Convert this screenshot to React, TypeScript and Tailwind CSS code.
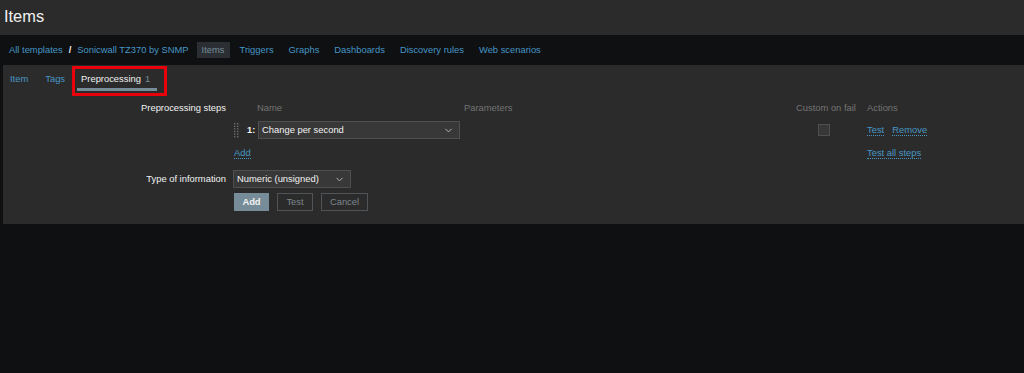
import { ChevronDown } from 'lucide-react';

const navLinks = ['Triggers', 'Graphs', 'Dashboards', 'Discovery rules', 'Web scenarios'];

const DragHandle = () => (
  <svg width="7" height="16" viewBox="0 0 7 16" className="shrink-0">
    {[0, 1, 2, 3, 4, 5].map((r) =>
      [0, 1].map((c) => (
        <rect key={`${r}-${c}`} x={1 + c * 3} y={1 + r * 2.6} width="1.4" height="1.4" fill="#6b6b6b" />
      )),
    )}
  </svg>
);

const Link = ({ children }: { children: string }) => (
  <span className="text-[#4796c4] border-b border-dotted border-[#4796c4] leading-[11px]">{children}</span>
);

const Select = ({ value, width }: { value: string; width: string }) => (
  <div
    className={`${width} h-[18px] flex items-center justify-between pl-[3px] pr-[5px] bg-[#383838] border border-[#4f4f4f] text-[#f2f2f2]`}
  >
    <span>{value}</span>
    <ChevronDown size={11} strokeWidth={2} className="text-[#bcbcbc]" />
  </div>
);

export default function App() {
  return (
    <div
      className="min-h-[373px] bg-[#0e1012] text-[9.4px] text-[#f2f2f2]"
      style={{ fontFamily: '"Liberation Sans", Arial, sans-serif' }}
    >
      <header className="h-[35px] bg-[#2b2b2b] flex items-center pl-[4px]">
        <h1 className="text-[16.4px] text-[#f2f2f2] leading-none -mt-[2px]">Items</h1>
      </header>

      <nav className="h-[30px] bg-[#0e1012] flex items-center pl-[9px]">
        <span className="text-[#4796c4]">All templates</span>
        <span className="mx-[6px] text-[#f2f2f2] font-bold">/</span>
        <span className="text-[#4796c4]">Sonicwall TZ370 by SNMP</span>
        <span className="ml-[8px] h-[16px] px-[5px] flex items-center bg-[#2b2e32] text-[#768d99]">Items</span>
        {navLinks.map((l, i) => (
          <span key={l} className={i === 0 ? 'ml-[10px] text-[#4796c4]' : 'ml-[15px] text-[#4796c4]'}>
            {l}
          </span>
        ))}
      </nav>

      <main className="ml-[3px] bg-[#2b2b2b] pb-[13px]">
        <div className="h-[31px] flex items-start pt-[2px]">
          <span className="ml-[7px] mt-[5px] text-[#4796c4]">Item</span>
          <span className="ml-[17px] mt-[5px] text-[#4796c4]">Tags</span>
          <div className="relative ml-[12px] w-[80px] h-[24px] flex flex-col">
            <div className="pl-[4px] pt-[5px] flex-1">
              <span className="text-[#f2f2f2]">Preprocessing</span>
              <span className="ml-[4px] text-[#768d99]">1</span>
            </div>
            <div className="h-[3px] bg-[#768d99]" />
            <div className="absolute -left-[5px] -top-[1px] w-[95px] h-[30px] border-[3px] border-[#e8000b]" />
          </div>
        </div>

        <div className="flex flex-col pt-[5px]">
          <div className="flex items-center h-[14px]">
            <div className="w-[230px] text-right pr-[7px]">Preprocessing steps</div>
            <div className="w-[24px]" />
            <div className="w-[207px] text-[#737373]">Name</div>
            <div className="w-[332px] text-[#737373]">Parameters</div>
            <div className="w-[71px] text-[#737373]">Custom on fail</div>
            <div className="text-[#737373]">Actions</div>
          </div>

          <div className="flex items-center h-[18px] mt-[6px]">
            <div className="w-[230px]" />
            <div className="w-[25px] flex items-center">
              <DragHandle />
              <span className="ml-[7px] font-bold">1:</span>
            </div>
            <div className="w-[206px]">
              <Select value="Change per second" width="w-[202px]" />
            </div>
            <div className="w-[332px]" />
            <div className="w-[71px] pl-[22px]">
              <div className="w-[12px] h-[12px] bg-[#383838] border border-[#4f4f4f]" />
            </div>
            <div className="flex gap-[8px]">
              <Link>Test</Link>
              <Link>Remove</Link>
            </div>
          </div>

          <div className="flex items-center h-[14px] mt-[7px]">
            <div className="w-[231px]" />
            <div className="w-[633px]">
              <Link>Add</Link>
            </div>
            <Link>Test all steps</Link>
          </div>

          <div className="flex items-center h-[18px] mt-[10px]">
            <div className="w-[230px] text-right pr-[7px]">Type of information</div>
            <Select value="Numeric (unsigned)" width="w-[118px]" />
          </div>

          <div className="flex items-center h-[18px] mt-[5px] ml-[231px] gap-[8px]">
            <button className="h-[18px] w-[35px] bg-[#768d99] text-[#f2f2f2] font-bold">Add</button>
            <button className="h-[18px] w-[36px] border border-[#4f5458] text-[#7d868c]">Test</button>
            <button className="h-[18px] w-[47px] border border-[#4f5458] text-[#7d868c]">Cancel</button>
          </div>
        </div>
      </main>
    </div>
  );
}
